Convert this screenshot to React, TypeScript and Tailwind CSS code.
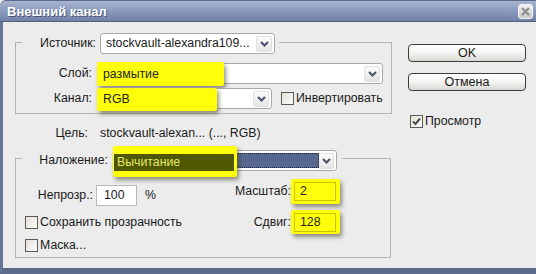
import type { ReactNode } from 'react'

function Chevron() {
  return (
    <svg width="9" height="6" viewBox="0 0 9 6" fill="none" stroke="#4a5068" strokeWidth="2">
      <path d="M1 1l3.5 3.5L8 1" />
    </svg>
  )
}

function Dropdown({ w, value, children }: { w: string; value?: string; children?: ReactNode }) {
  return (
    <div className={`${w} relative h-[21px] rounded-[3px] border border-[#a9a9a9] bg-white flex items-center`}>
      <span className="flex-1 pl-[5px] whitespace-nowrap overflow-hidden">{value}</span>
      <span className="mr-[2px] w-[16px] h-[16px] shrink-0 rounded-[2px] bg-gradient-to-b from-[#fbfbfb] to-[#e4e4e4] border border-[#e0e0e0] flex items-center justify-center">
        <Chevron />
      </span>
      {children}
    </div>
  )
}

function Marker({ className, children }: { className: string; children?: ReactNode }) {
  return (
    <div
      className={`absolute ${className} bg-[#ffff0a] rounded-[2px] shadow-[2px_3px_4px_rgba(60,60,40,0.55)] flex items-center`}
    >
      {children}
    </div>
  )
}

function Check({ checked, label }: { checked?: boolean; label: string }) {
  return (
    <div className="flex items-center gap-[2px]">
      <span className="w-[13px] h-[13px] border border-[#5a5a5a] bg-gradient-to-br from-[#e4e2da] to-[#fbfbf9] flex items-center justify-center">
        {checked && (
          <svg width="9" height="9" viewBox="0 0 9 9" fill="none" stroke="#4d4d4d" strokeWidth="2">
            <path d="M1 4.5l2.5 2.5L8 1.5" />
          </svg>
        )}
      </span>
      <span>{label}</span>
    </div>
  )
}

function Button({ label }: { label: string }) {
  return (
    <button
      type="button"
      className="w-[118px] h-[18px] rounded-[4px] border border-[#3c3c3c] bg-gradient-to-b from-[#ffffff] via-[#f4f4f2] to-[#d8d8d4] font-normal text-[12.5px] leading-none text-[#1a1a1a] flex items-center justify-center"
    >
      {label}
    </button>
  )
}

export default function App() {
  return (
    <div className="w-[536px] h-[274px] bg-[#ececec] flex flex-col overflow-hidden font-['Liberation_Sans',Arial,sans-serif] text-[12.3px] leading-[15px] text-[#1a1a1a]">
      {/* заголовок окна */}
      <div className="h-[22px] shrink-0 rounded-tl-[6px] border-t border-[#5b6a8c] border-b border-b-[#55607c] bg-gradient-to-b from-[#a8b5d0] via-[#8a9abf] to-[#7080a6] flex items-center justify-between pl-[7px] pr-[3px]">
        <span className="text-white font-bold text-[13px] [text-shadow:1px_1px_0_rgba(40,50,80,0.6)]">
          Внешний канал
        </span>
        <span className="w-[15px] h-[15px] rounded-[3px] border border-[#f4f4f4] bg-gradient-to-b from-[#f2f2f2] to-[#c9c9c9] flex items-center justify-center">
          <svg width="9" height="9" viewBox="0 0 9 9" stroke="#8a8a8a" strokeWidth="2">
            <path d="M1 1l7 7M8 1l-7 7" />
          </svg>
        </span>
      </div>

      <div className="flex-1 flex border-l-[3px] border-l-[#667597] border-b-[6px] border-b-[#5c6a8b]">
        {/* левая часть */}
        <div className="w-[392px] pl-[12px] pt-[20px] flex flex-col">
          {/* группа источника */}
          <div className="w-[377px] h-[72px] border border-[#b4b4b4] flex flex-col">
            <div className="-mt-[10px] ml-[6px] w-fit pr-[4px] bg-[#ececec] flex items-center">
              <span className="w-[74px] text-right">Источник:</span>
              <div className="ml-[4px]">
                <Dropdown w="w-[175px]" value="stockvault-alexandra109..." />
              </div>
            </div>
            <div className="mt-[9px] flex items-center">
              <span className="w-[76px] text-right">Слой:</span>
              <div className="ml-[5px]">
                <Dropdown w="w-[286px]">
                  <Marker className="-left-[1px] -top-[2px] w-[127px] h-[24px]">
                    <span className="pl-[6px] text-[#222]">размытие</span>
                  </Marker>
                </Dropdown>
              </div>
            </div>
            <div className="mt-[4px] flex items-center">
              <span className="w-[76px] text-right">Канал:</span>
              <div className="ml-[5px]">
                <Dropdown w="w-[175px]">
                  <Marker className="-left-[1px] -top-[1px] w-[120px] h-[23px]">
                    <span className="pl-[6px] text-[#222]">RGB</span>
                  </Marker>
                </Dropdown>
              </div>
              <div className="ml-[9px]">
                <Check label="Инвертировать" />
              </div>
            </div>
          </div>

          {/* цель */}
          <div className="mt-[12px] flex items-center">
            <span className="w-[73px] text-right">Цель:</span>
            <span className="ml-[12px]">stockvault-alexan... (..., RGB)</span>
          </div>

          {/* группа наложения */}
          <div className="mt-[17px] w-[376px] h-[100px] border border-[#b4b4b4] flex flex-col">
            <div className="-mt-[9px] ml-[6px] w-fit pr-[5px] bg-[#ececec] flex items-center">
              <span className="w-[86px] text-right">Наложение:</span>
              <div className="ml-[5px]">
                <Dropdown w="w-[224px]">
                  <span className="absolute left-[2px] top-[2px] w-[203px] h-[15px] bg-[#56688f] border border-dotted border-[#1c2438]" />
                  <Marker className="-left-[1px] -top-[5px] w-[124px] h-[31px]">
                    <span className="ml-[1px] mt-[1px] w-[120px] h-[17px] bg-[#4f5800] text-[#e2e86a] pl-[3px] leading-[17px]">
                      Вычитание
                    </span>
                  </Marker>
                </Dropdown>
              </div>
            </div>

            <div className="flex">
              <div className="w-[215px] flex flex-col">
                <div className="mt-[14px] flex items-center">
                  <span className="w-[77px] text-right">Непрозр.:</span>
                  <span className="ml-[3px] w-[41px] h-[21px] border border-[#b9b9b9] bg-white pl-[7px] flex items-center">
                    100
                  </span>
                  <span className="ml-[8px]">%</span>
                </div>
                <div className="mt-[9px] pl-[9px]">
                  <Check label="Сохранить прозрачность" />
                </div>
                <div className="mt-[8px] pl-[9px]">
                  <Check label="Маска..." />
                </div>
              </div>

              <div className="w-[110px] flex flex-col">
                <div className="mt-[11px] flex items-center justify-end pr-[4px]">
                  <span>Масштаб:</span>
                  <div className="ml-[4px] relative w-[42px] h-[19px]">
                    <Marker className="-left-[4px] -top-[3px] w-[49px] h-[25px]">
                      <span className="ml-[3px] w-[42px] h-[19px] border border-[#c9c400] pl-[5px] flex items-center text-[#222]">
                        2
                      </span>
                    </Marker>
                  </div>
                </div>
                <div className="mt-[12px] flex items-center justify-end pr-[4px]">
                  <span>Сдвиг:</span>
                  <div className="ml-[4px] relative w-[42px] h-[19px]">
                    <Marker className="-left-[4px] -top-[3px] w-[49px] h-[24px]">
                      <span className="ml-[3px] w-[42px] h-[19px] border border-[#c9c400] pl-[5px] flex items-center text-[#222]">
                        128
                      </span>
                    </Marker>
                  </div>
                </div>
              </div>
            </div>
          </div>
        </div>

        {/* кнопки */}
        <div className="pl-[13px] pt-[22px] flex flex-col">
          <Button label="OK" />
          <div className="mt-[11px]">
            <Button label="Отмена" />
          </div>
          <div className="mt-[23px] ml-[2px]">
            <Check checked label="Просмотр" />
          </div>
        </div>
      </div>
    </div>
  )
}
